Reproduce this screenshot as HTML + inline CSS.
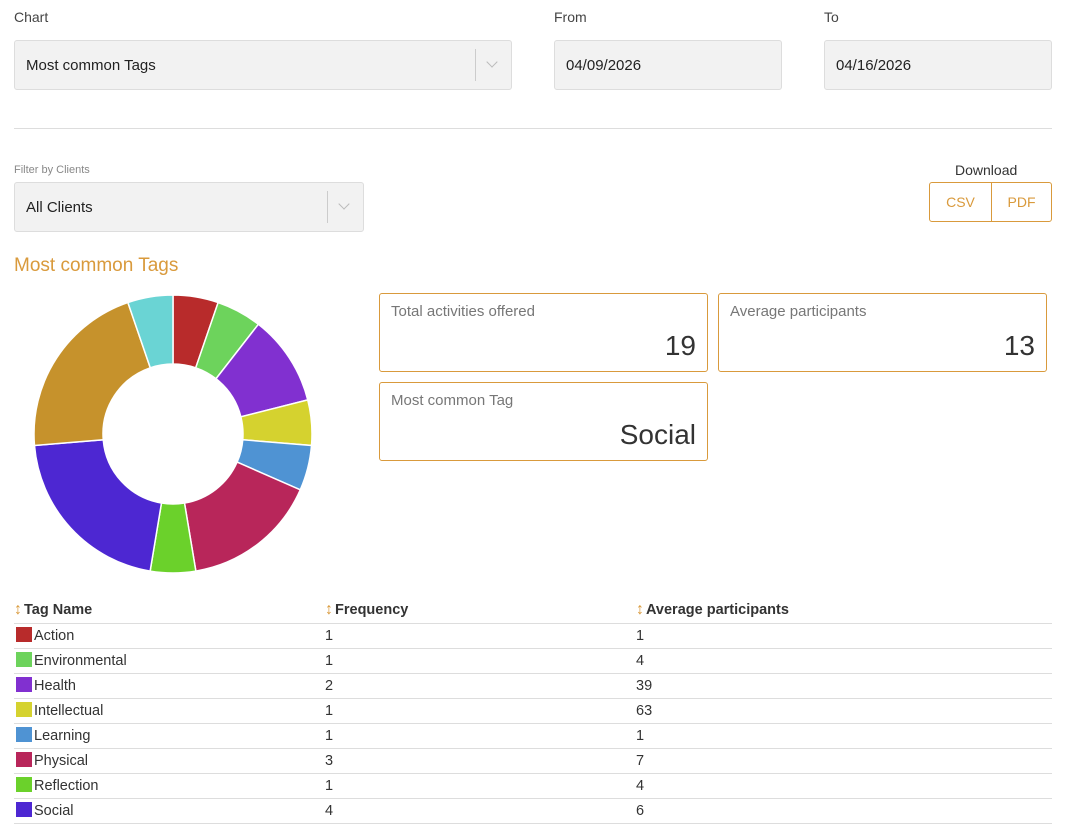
<!DOCTYPE html>
<html><head><meta charset="utf-8"><style>
*{box-sizing:border-box;margin:0;padding:0}
body{width:1071px;height:810px;overflow:hidden;background:#fff;font-family:"Liberation Sans",sans-serif;color:#333;position:relative}
.abs{position:absolute}
.lbl{font-size:14px;color:#444}
.sel{position:absolute;background:#f2f2f2;border:1px solid #ddd;border-radius:3px;font-size:15px;color:#222;padding-left:11px;display:flex;align-items:center}
.sel .sep{position:absolute;top:8px;bottom:8px;width:1px;background:#ccc}
.sel .chev{position:absolute;width:8px;height:8px;border-right:1.5px solid #bbb;border-bottom:1.5px solid #bbb;transform:rotate(45deg)}
.card{position:absolute;border:1px solid #d99a3c;border-radius:3px}
.card .t{position:absolute;left:11px;top:9px;font-size:15px;color:#777}
.card .v{position:absolute;right:11px;top:36px;font-size:28px;color:#333}
table{position:absolute;left:14px;top:597px;width:1038px;border-collapse:collapse;font-size:14.5px;color:#333}
th{text-align:left;font-weight:bold;height:26px;vertical-align:bottom;padding-bottom:4px;border-bottom:1px solid #ddd;font-size:14.5px;color:#333}
td{height:25px;border-bottom:1px solid #ddd;padding:0}
.sw{display:inline-block;width:16px;height:15px;vertical-align:-2px;margin:0 2px 0 2px}
.ar{color:#d99a3c;font-weight:normal;font-size:16px;margin-right:2px}
</style></head><body>
<div class="abs lbl" style="left:14px;top:9px">Chart</div>
<div class="abs lbl" style="left:554px;top:9px">From</div>
<div class="abs lbl" style="left:824px;top:9px">To</div>
<div class="sel" style="left:14px;top:40px;width:498px;height:50px">Most common Tags<div class="sep" style="left:460px"></div><div class="chev" style="left:473px;top:17px"></div></div>
<div class="sel" style="left:554px;top:40px;width:228px;height:50px">04/09/2026</div>
<div class="sel" style="left:824px;top:40px;width:228px;height:50px">04/16/2026</div>
<div class="abs" style="left:14px;top:128px;width:1038px;height:1px;background:#ddd"></div>
<div class="abs" style="left:14px;top:164px;font-size:11px;color:#888">Filter by Clients</div>
<div class="sel" style="left:14px;top:182px;width:350px;height:50px">All Clients<div class="sep" style="left:312px"></div><div class="chev" style="left:325px;top:17px"></div></div>
<div class="abs lbl" style="left:955px;top:162px;color:#333">Download</div>
<div class="abs" style="left:929px;top:182px;width:123px;height:40px;border:1px solid #d99a3c;border-radius:3px;display:flex;color:#d99a3c;font-size:14px">
<div style="width:62px;border-right:1px solid #d99a3c;display:flex;align-items:center;justify-content:center">CSV</div>
<div style="flex:1;display:flex;align-items:center;justify-content:center">PDF</div></div>
<div class="abs" style="left:14px;top:255px;font-size:19px;color:#d99a3c">Most common Tags</div>
<svg class="abs" style="left:0;top:0" width="360" height="590" id="pie"></svg>
<div class="card" style="left:379px;top:293px;width:329px;height:79px"><div class="t">Total activities offered</div><div class="v">19</div></div>
<div class="card" style="left:718px;top:293px;width:329px;height:79px"><div class="t">Average participants</div><div class="v">13</div></div>
<div class="card" style="left:379px;top:382px;width:329px;height:79px"><div class="t">Most common Tag</div><div class="v">Social</div></div>
<table>
<tr><th style="width:311px"><span class="ar">↕</span>Tag Name</th><th style="width:311px"><span class="ar">↕</span>Frequency</th><th><span class="ar">↕</span>Average participants</th></tr>
<tr><td><span class="sw" style="background:#b82b2b"></span>Action</td><td>1</td><td>1</td></tr>
<tr><td><span class="sw" style="background:#6dd35c"></span>Environmental</td><td>1</td><td>4</td></tr>
<tr><td><span class="sw" style="background:#8130d0"></span>Health</td><td>2</td><td>39</td></tr>
<tr><td><span class="sw" style="background:#d5d22f"></span>Intellectual</td><td>1</td><td>63</td></tr>
<tr><td><span class="sw" style="background:#4f93d3"></span>Learning</td><td>1</td><td>1</td></tr>
<tr><td><span class="sw" style="background:#b8265a"></span>Physical</td><td>3</td><td>7</td></tr>
<tr><td><span class="sw" style="background:#6bd12b"></span>Reflection</td><td>1</td><td>4</td></tr>
<tr><td><span class="sw" style="background:#4d27d2"></span>Social</td><td>4</td><td>6</td></tr>
</table>
<script>
var d=[[1,'#b82b2b'],[1,'#6dd35c'],[2,'#8130d0'],[1,'#d5d22f'],[1,'#4f93d3'],[3,'#b8265a'],[1,'#6bd12b'],[4,'#4d27d2'],[4,'#c6922c'],[1,'#6ad4d4']];
var cx=173,cy=434,R=139,r=70,a=0,s='';
function p(rad,ang){return (cx+rad*Math.sin(ang)).toFixed(2)+' '+(cy-rad*Math.cos(ang)).toFixed(2)}
d.forEach(function(e){var b=a+e[0]/19*2*Math.PI,l=(b-a)>Math.PI?1:0;
s+='<path d="M'+p(R,a)+' A'+R+' '+R+' 0 '+l+' 1 '+p(R,b)+' L'+p(r,b)+' A'+r+' '+r+' 0 '+l+' 0 '+p(r,a)+' Z" fill="'+e[1]+'" stroke="#fff" stroke-width="1.5"/>';a=b;});
document.getElementById('pie').innerHTML=s;
</script>
</body></html>
